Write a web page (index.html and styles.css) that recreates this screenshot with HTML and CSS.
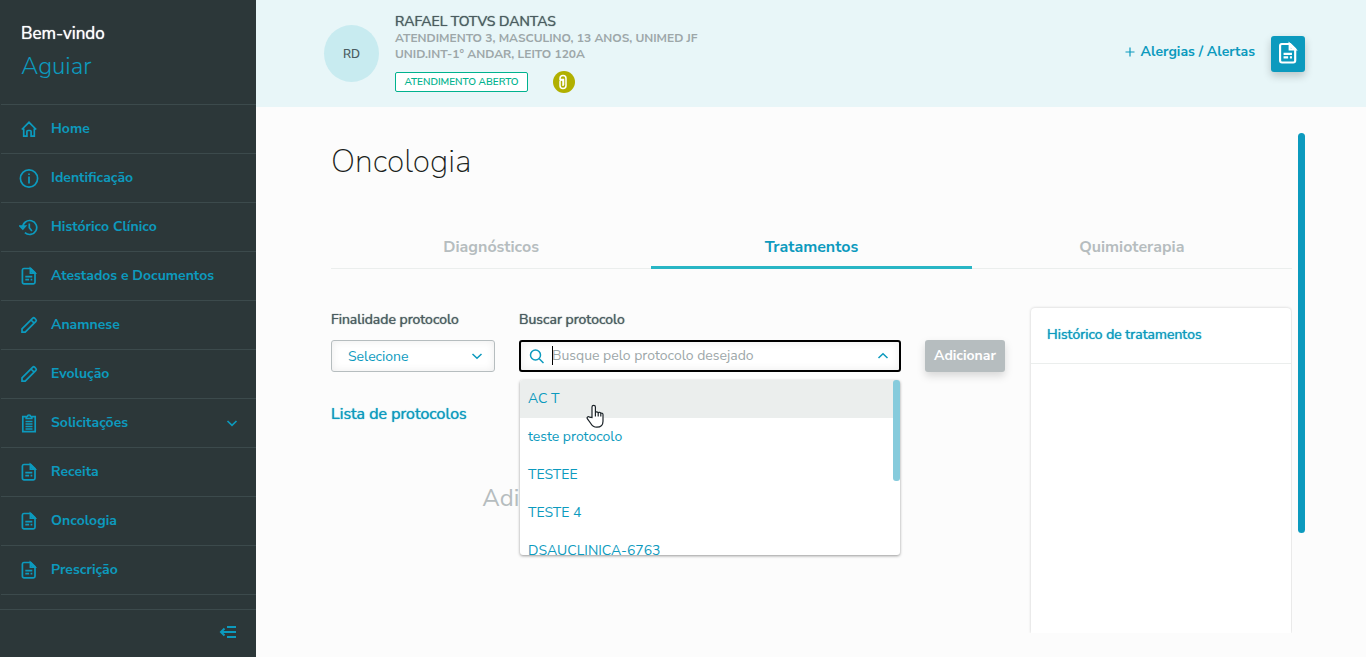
FILE: index.html
```html
<!DOCTYPE html>
<html lang="pt-BR">
<head>
    <meta charset="UTF-8">
    <meta name="viewport" content="width=device-width, initial-scale=1.0">
    <title>Oncologia</title>
    <link rel="stylesheet" href="styles.css">
</head>
<body>
    <!-- Shared icons -->
    <svg class="sprite" aria-hidden="true">
        <symbol id="icon-doc" viewBox="0 0 20 20">
            <path d="M4.800 2.500h7l4.200 4.200v9.600a1.600 1.600 0 0 1-1.600 1.600H5a1.600 1.600 0 0 1-1.600-1.600V4a1.500 1.500 0 0 1 1.400-1.500z"/>
            <path d="M11.400 2.500v4.600H16zM11.900 3.800l3 3"/>
            <path d="M6.300 10.700h7M6.300 13.700h3.800M11.600 13.700h1.700"/>
        </symbol>
        <symbol id="icon-pencil" viewBox="0 0 20 20">
            <path d="M3 17.200v-3.400L13.800 3.200a1.300 1.300 0 0 1 1.800 0l1.300 1.300a1.300 1.300 0 0 1 0 1.800L6.200 17.200zM12 5l3.200 3.200"/>
        </symbol>
        <symbol id="icon-chevron" viewBox="0 0 12 12">
            <path d="M1.500 4l4.500 4.300L10.500 4"/>
        </symbol>
    </svg>

    <!-- Sidebar -->
    <aside class="sidebar">
        <div class="welcome">
            <span class="welcome-label">Bem-vindo</span>
            <span class="welcome-name">Aguiar</span>
        </div>
        <nav class="menu">
            <a href="#"><svg viewBox="0 0 20 20"><path d="M2.800 10.500L10 3.300l7.200 7.200M4.700 9.500v7.700h3.200v-4.700a1 1 0 0 1 1-1h2.200a1 1 0 0 1 1 1v4.700h3.200V9.500"/></svg>Home</a>
            <a href="#"><svg viewBox="0 0 20 20"><circle cx="10" cy="10.500" r="8.600"/><path d="M10 8.500v7M10 5.500v1.500"/></svg>Identificação</a>
            <a href="#"><svg viewBox="0 0 20 20"><path d="M3.700 10.500a7 7 0 1 1 2.200 5.100M.8 9l3 3 2.600-3zM10.300 6.500v4.300l2.600 3.200"/></svg>Histórico Clínico</a>
            <a href="#"><svg><use href="#icon-doc"/></svg>Atestados e Documentos</a>
            <a href="#"><svg><use href="#icon-pencil"/></svg>Anamnese</a>
            <a href="#"><svg><use href="#icon-pencil"/></svg>Evolução</a>
            <a href="#"><svg viewBox="0 0 20 20"><path d="M6.500 3.700H3.800v15h12.400v-15h-2.700M7.200 5.500v-2h1.300a1.500 1.500 0 0 1 3 0h1.300v2zM6.500 8.500h7M6.500 11h7M6.500 13.500h7M6.500 16h7"/></svg>Solicitações<svg class="chevron"><use href="#icon-chevron"/></svg></a>
            <a href="#"><svg><use href="#icon-doc"/></svg>Receita</a>
            <a href="#"><svg><use href="#icon-doc"/></svg>Oncologia</a>
            <a href="#"><svg><use href="#icon-doc"/></svg>Prescrição</a>
        </nav>
        <div class="sidebar-footer">
            <button class="collapse" aria-label="Recolher menu">
                <svg viewBox="0 0 18 14"><path d="M8 2h9M2 7h15M8 12h9M5.500 3.500L2 7l3.500 3.500"/></svg>
            </button>
        </div>
    </aside>

    <div class="page">
        <!-- Patient header -->
        <header class="patient">
            <div class="avatar">RD</div>
            <div class="patient-data">
                <div class="patient-name">RAFAEL TOTVS DANTAS</div>
                <div class="patient-info">ATENDIMENTO 3, MASCULINO, 13 ANOS, UNIMED JF</div>
                <div class="patient-info">UNID.INT-1° ANDAR, LEITO 120A</div>
                <div class="patient-tags">
                    <span class="tag">ATENDIMENTO ABERTO</span>
                    <span class="clip"><svg viewBox="0 0 22 22"><path d="M7 9V7.500a3 3 0 0 1 6 0v7a3 3 0 0 1-6 0v-4a1.500 1.500 0 0 1 3 0V15M7 8.500h3.500V14"/></svg></span>
                </div>
            </div>
            <a href="#" class="alerts"><svg viewBox="0 0 10 10"><path d="M5 .5v9M.5 5h9"/></svg>Alergias / Alertas</a>
            <button class="notes" aria-label="Documentos"><svg><use href="#icon-doc"/></svg></button>
        </header>

        <!-- Content -->
        <main class="content">
            <div class="scroll-area">
                <h1>Oncologia</h1>
                <nav class="tabs">
                    <a href="#">Diagnósticos</a>
                    <a href="#" class="active">Tratamentos</a>
                    <a href="#">Quimioterapia</a>
                </nav>

                <div class="columns">
                    <section class="protocols">
                        <form class="filters">
                            <div class="field">
                                <label for="finalidade">Finalidade protocolo</label>
                                <div class="control">
                                    <select id="finalidade"><option>Selecione</option></select>
                                    <svg class="chevron"><use href="#icon-chevron"/></svg>
                                </div>
                            </div>
                            <div class="field search">
                                <label for="busca">Buscar protocolo</label>
                                <div class="control">
                                    <svg class="magnifier" viewBox="0 0 16 16"><circle cx="6.500" cy="6" r="5"/><path d="M10.200 9.700l4.300 4.300"/></svg>
                                    <input type="text" id="busca" placeholder="Busque pelo protocolo desejado">
                                    <span class="caret"></span>
                                    <svg class="chevron up"><use href="#icon-chevron"/></svg>
                                    <div class="dropdown">
                                        <ul>
                                            <li class="hover">AC T</li>
                                            <li>teste protocolo</li>
                                            <li>TESTEE</li>
                                            <li>TESTE 4</li>
                                            <li>DSAUCLINICA-6763</li>
                                        </ul>
                                        <span class="dropdown-bar"></span>
                                        <svg class="pointer" viewBox="0 0 18 24"><path d="M6 13.500V3a1.700 1.700 0 0 1 3.400 0v5.500c.3-1 2.500-1 2.800.4.500-1 2.400-.8 2.600.6.800-.7 2.200-.2 2.200 1.200v6.500c0 3.600-2.300 6-6.200 6-3.300 0-4.800-1.500-6-3.700L1.300 14.700c-.8-1.500.8-2.700 2.200-1.600zM9.400 8.500v4M12.200 9v3.500M14.800 10v2.500"/></svg>
                                    </div>
                                </div>
                            </div>
                            <button type="button" class="add" disabled>Adicionar</button>
                        </form>
                        <h2>Lista de protocolos</h2>
                        <p class="empty">Adicione protocolos de tratamento</p>
                    </section>

                    <section class="history">
                        <h3>Histórico de tratamentos</h3>
                    </section>
                </div>
            </div>
            <div class="scrollbar"></div>
        </main>
    </div>
</body>
</html>
```
FILE: styles.css
```css
:root {
    --blue: #0c9abe;
    --dark: #2c3739;
    --gray: #b6bdbf;
    --line: #ebeeed;
}

* {
    box-sizing: border-box;
}

body {
    margin: 0;
    height: 100vh;
    display: flex;
    overflow: hidden;
    background: #fcfcfc;
    color: #4a5c60;
    font-family: "Nunito Sans", "Open Sans", sans-serif;
    font-size: 14px;
}

a {
    color: var(--blue);
    text-decoration: none;
}

svg {
    fill: none;
    stroke: currentColor;
    stroke-width: 1.5;
    flex-shrink: 0;
}

button,
input,
select {
    font: inherit;
}

.sprite {
    position: absolute;
    width: 0;
    height: 0;
}

.chevron {
    width: 12px;
    height: 12px;
    color: var(--blue);
}

/* Regular weight, slightly thickened */
.welcome-label,
.patient-name,
.field label,
h2,
h3 {
    font-weight: 400;
    text-shadow: 0 0 1px currentColor;
}

/* Sidebar */
.sidebar {
    width: 256px;
    flex-shrink: 0;
    display: flex;
    flex-direction: column;
    background: var(--dark);
    color: var(--blue);
}

.welcome {
    display: flex;
    flex-direction: column;
    height: 104px;
    padding: 18px 21px 0;
}

.welcome-label {
    color: #fff;
    font-size: 17px;
    line-height: 32px;
}

.welcome-name {
    font-size: 24px;
    font-weight: 300;
    line-height: 32px;
}

.menu {
    flex: 1;
    margin-left: 1px;
    overflow: hidden;
    border-top: 1px solid #3c4a4c;
}

.menu a {
    display: flex;
    align-items: center;
    height: 49px;
    padding: 0 18px 2px;
    border-bottom: 1px solid #3c4a4c;
    font-weight: 700;
}

.menu svg {
    width: 20px;
    height: 20px;
    margin: 2px 12px 0 0;
    stroke-width: 1.7;
}

.menu .chevron {
    width: 12px;
    height: 12px;
    margin: 2px 0 0 auto;
}

.sidebar-footer {
    display: flex;
    justify-content: flex-end;
    height: 48px;
    padding: 0 19px 4px;
    border-top: 1px solid #3c4a4c;
}

.collapse {
    padding: 0;
    border: none;
    background: none;
    color: var(--blue);
    cursor: pointer;
}

.collapse svg {
    display: block;
    width: 18px;
    height: 14px;
    stroke-width: 2;
}

/* Patient header */
.page {
    flex: 1;
    min-width: 0;
    display: flex;
    flex-direction: column;
}

.patient {
    display: flex;
    align-items: center;
    height: 107px;
    padding: 0 61px 0 68px;
    background: #e8f6f8;
}

.avatar {
    display: flex;
    align-items: center;
    justify-content: center;
    width: 55px;
    height: 57px;
    margin-right: 16px;
    border-radius: 50%;
    background: #c8ebf0;
    font-size: 12px;
    font-weight: 600;
}

.patient-data {
    flex: 1;
    padding-bottom: 2px;
}

.patient-name {
    line-height: 17px;
}

.patient-info {
    color: #9da7a9;
    font-size: 12px;
    font-weight: 700;
    line-height: 16px;
}

.patient-tags {
    display: flex;
    align-items: center;
    gap: 25px;
    height: 22px;
    margin-top: 9px;
}

.tag {
    width: 133px;
    border: 1px solid #00b28e;
    border-radius: 2px;
    background: #fff;
    color: #00b28e;
    font-size: 10px;
    font-weight: 600;
    line-height: 18px;
    text-align: center;
}

.clip {
    width: 22px;
    height: 22px;
    border-radius: 50%;
    background: #b1b000;
    color: #fff;
}

.clip svg {
    display: block;
}

.alerts {
    display: flex;
    align-items: center;
    gap: 6px;
    margin-right: 16px;
    padding-bottom: 4px;
    font-weight: 700;
}

.alerts svg {
    width: 10px;
    height: 10px;
    stroke-width: 1.2;
}

.notes {
    display: flex;
    align-items: center;
    justify-content: center;
    width: 34px;
    height: 36px;
    padding: 0 0 2px;
    border: none;
    border-radius: 3px;
    background: var(--blue);
    box-shadow: 0 4px 8px rgba(0, 0, 0, 0.2);
    color: #fff;
}

.notes svg {
    width: 24px;
    height: 24px;
    stroke-width: 1.8;
}

/* Content */
.content {
    flex: 1;
    min-height: 0;
    display: flex;
    gap: 6px;
    padding: 26px 61px 24px 75px;
}

.scroll-area {
    flex: 1;
    display: flex;
    flex-direction: column;
    overflow: hidden;
}

.scrollbar {
    width: 7px;
    height: 80%;
    border-radius: 4px;
    background: var(--blue);
}

h1 {
    margin: 9px 0 44px;
    color: #1b1f20;
    font-size: 32px;
    font-weight: 200;
    line-height: 40px;
}

.tabs {
    display: flex;
    border-bottom: 1px solid var(--line);
}

.tabs a {
    flex: 1;
    height: 43px;
    margin-bottom: -1px;
    border-bottom: 3px solid transparent;
    color: var(--gray);
    font-size: 16px;
    font-weight: 700;
    line-height: 42px;
    text-align: center;
}

.tabs a.active {
    border-color: #29b6c5;
    color: var(--blue);
}

.columns {
    flex: 1;
    display: flex;
    gap: 26px;
    padding: 39px 1px 0 0;
}

.protocols {
    flex: 1;
}

.filters {
    display: flex;
    align-items: flex-end;
    gap: 24px;
}

.field {
    width: 164px;
}

.field.search {
    width: auto;
    flex: 1;
}

.field label {
    display: block;
    margin: 1px 0 9px;
    line-height: 22px;
}

.control {
    position: relative;
}

.control select,
.control input {
    display: block;
    width: 100%;
    height: 32px;
    border: 1px solid var(--gray);
    border-radius: 3px;
    background: #fff;
    box-shadow: inset 0 0 8px rgba(0, 0, 0, 0.08);
    color: var(--blue);
}

.control select {
    appearance: none;
    padding: 0 16px;
}

.control input {
    padding: 0 31px 2px;
    border: 2px solid #000;
    outline: none;
}

.control input::placeholder {
    color: #9da7a9;
}

.control > .chevron {
    position: absolute;
    top: 10px;
    right: 12px;
    pointer-events: none;
}

.control > .chevron.up {
    transform: rotate(180deg);
}

.magnifier {
    position: absolute;
    top: 9px;
    left: 10px;
    width: 16px;
    height: 16px;
    color: var(--blue);
}

.caret {
    position: absolute;
    top: 6px;
    left: 33px;
    width: 1px;
    height: 19px;
    background: #000;
}

.dropdown {
    position: absolute;
    top: 40px;
    left: 1px;
    right: 1px;
    height: 175px;
    border-radius: 3px;
    background: #fff;
    box-shadow: 0 1px 3px rgba(0, 0, 0, 0.4);
}

.dropdown ul {
    height: 100%;
    margin: 0;
    padding: 0;
    overflow: hidden;
    border-radius: 3px;
    list-style: none;
}

.dropdown li {
    height: 38px;
    padding: 0 8px;
    color: var(--blue);
    line-height: 38px;
}

.dropdown li.hover {
    background: #ebeeed;
}

.dropdown-bar {
    position: absolute;
    top: 0;
    right: 0;
    width: 7px;
    height: 101px;
    border-radius: 3px;
    background: #86cbdc;
}

.pointer {
    position: absolute;
    top: 24px;
    left: 66px;
    width: 18px;
    height: 24px;
    fill: #fff;
    stroke: #1b2328;
    stroke-width: 1.2;
}

.add {
    width: 80px;
    height: 32px;
    padding: 0 0 2px;
    border: none;
    border-radius: 3px;
    background: var(--gray);
    box-shadow: 0 4px 8px rgba(0, 0, 0, 0.15);
    color: #fff;
    font-weight: 700;
}

h2 {
    margin: 30px 0 0;
    color: var(--blue);
    font-size: 16px;
    line-height: 24px;
}

.empty {
    margin: 56px 0 0;
    color: var(--gray);
    font-size: 24px;
    font-weight: 400;
    line-height: 32px;
    text-align: center;
}

.history {
    width: 260px;
    border-radius: 4px 4px 0 0;
    background: #fff;
    box-shadow: 0 0 3px rgba(0, 0, 0, 0.2);
}

h3 {
    margin: 0;
    padding: 15px 16px 16px;
    border-bottom: 1px solid var(--line);
    color: var(--blue);
    font-size: 14px;
    line-height: 24px;
}
```
